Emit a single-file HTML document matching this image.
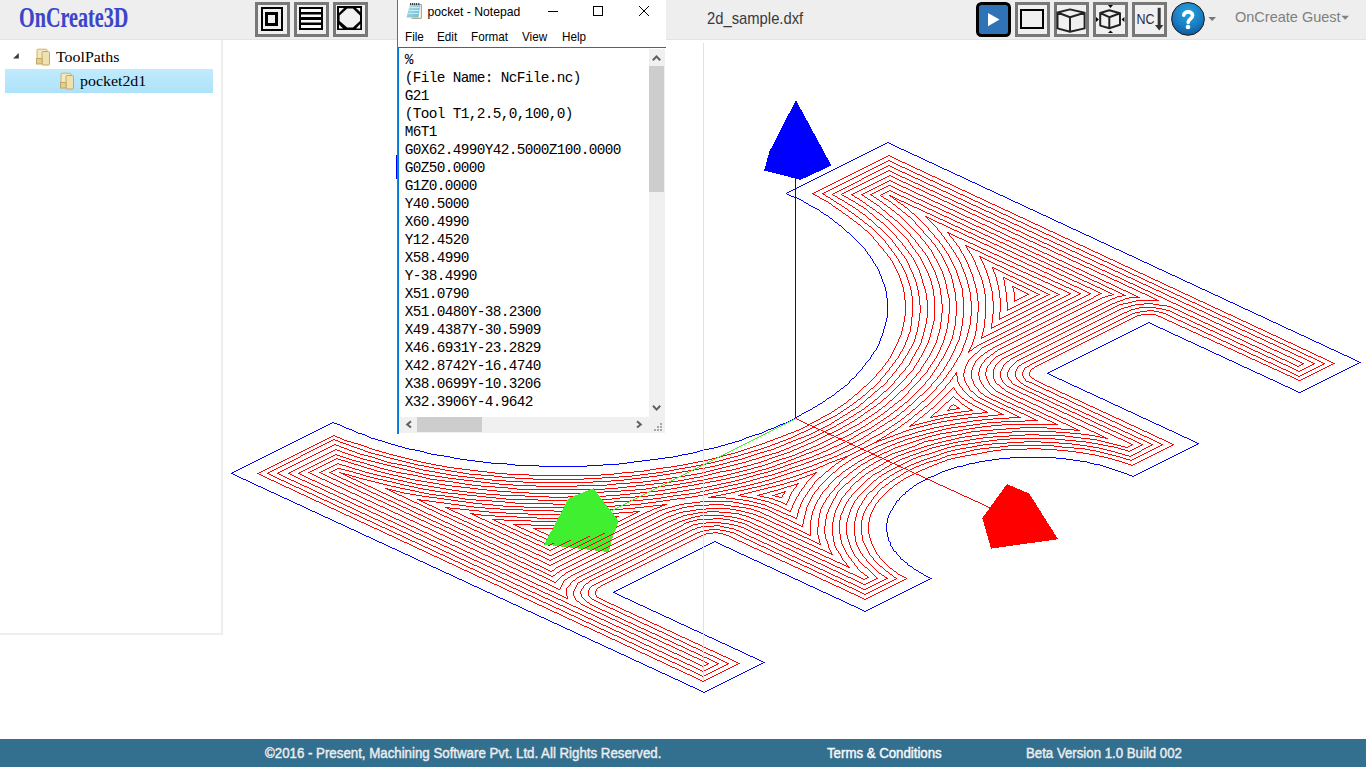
<!DOCTYPE html>
<html><head><meta charset="utf-8">
<style>
*{margin:0;padding:0;box-sizing:border-box}
html,body{width:1366px;height:767px;overflow:hidden;background:#fff;font-family:"Liberation Sans",sans-serif;position:relative}
.abs{position:absolute}
#hdr{left:0;top:0;width:1366px;height:40px;background:#eeeeee;border-bottom:1px solid #e3e3e3}
#logo{left:18.5px;top:0.5px;font-family:"Liberation Serif",serif;font-weight:bold;font-size:28.8px;color:#3b45c9;transform-origin:0 0;transform:scaleX(0.70);-webkit-text-stroke:0.15px #3b45c9;white-space:nowrap;line-height:32px}
.ib{width:35px;height:35px;border:3px solid #777;background:#f0f0f0}
#left{left:0;top:40px;width:223px;height:595px;border-right:2px solid #eee;border-bottom:2px solid #eee;background:#fff}
.tree{font-family:"Liberation Serif",serif;font-size:15.3px;color:#000;white-space:nowrap}
#sel{left:5px;top:69px;width:208px;height:24px;background:linear-gradient(#c1ebfd,#ade2fa)}
#ftr{left:0;top:739px;width:1366px;height:28px;background:#336f8f;color:#ececec;font-size:14px;-webkit-text-stroke:0.45px #ececec}
#ftr span{position:absolute;top:6px;white-space:nowrap;transform-origin:0 0}
#np{left:397px;top:0;width:269px;height:434px;background:#fff;border-left:1px solid #1883d7}
#edit{left:0px;top:47px;width:268px;height:387px;border-top:1px solid #0078d7;border-left:1px solid #0078d7}
.mono{font-family:"Liberation Mono",monospace;font-size:14.4px;letter-spacing:-0.64px;line-height:18px;color:#000;white-space:pre}
.menu{font-size:12.6px;color:#000;top:29.5px;white-space:nowrap;transform-origin:0 0;transform:scaleX(0.93)}
.sb{background:#f0f0f0}
</style></head><body>
<div id="hdr" class="abs"></div>
<div id="logo" class="abs">OnCreate3D</div>
<div class="abs ib" style="left:255px;top:2px"></div>
<div class="abs ib" style="left:294px;top:2px"></div>
<div class="abs ib" style="left:333px;top:2px"></div>
<svg class="abs" style="left:0;top:0" width="400" height="40">
 <g fill="none" stroke="#000">
  <rect x="262" y="8" width="20" height="22" stroke-width="2"/>
  <rect x="266.5" y="13.5" width="10" height="11" stroke-width="3"/>
 </g>
 <rect x="299" y="7" width="24" height="23" fill="#000"/>
 <g fill="#fafafa"><rect x="301" y="9" width="20" height="3"/><rect x="301" y="14.5" width="20" height="2.5"/><rect x="301" y="20" width="20" height="2.5"/><rect x="301" y="25" width="20" height="3"/></g>
 <rect x="337" y="6" width="25" height="24" fill="#000"/>
 <g fill="#f2f2f2">
  <polygon points="347.2,8.6 352.9,8.6 360,15.6 360,20.9 352.9,27.6 347.2,27.6 339.6,20.9 339.6,15.6"/>
  <polygon points="339,8 344,8 339,13"/><polygon points="356,8 360.2,8 360.2,12"/>
  <polygon points="339,24.5 339,28.5 343,28.5"/><polygon points="360.2,24 360.2,28.5 356,28.5"/>
 </g>
</svg>
<div class="abs" style="left:707px;top:9.3px;font-size:17px;color:#3a3a3a;transform-origin:0 0;transform:scaleX(0.87);white-space:nowrap">2d_sample.dxf</div>
<div class="abs" style="left:1235px;top:9px;font-size:14.5px;color:#808080">OnCreate Guest</div>
<svg class="abs" style="left:960px;top:0" width="406" height="40">
 <rect x="17.5" y="3.5" width="32" height="32" rx="4" fill="#2f73b6" stroke="#000" stroke-width="3"/>
 <polygon points="28,13 28,26.2 39.5,19.5" fill="#fff"/>
 <rect x="55" y="2" width="35" height="35" fill="#f0f0f0"/><rect x="56.5" y="3.5" width="32" height="32" fill="none" stroke="#777" stroke-width="3"/>
 <rect x="61" y="10" width="22" height="18" fill="none" stroke="#000" stroke-width="2"/>
 <rect x="94" y="2" width="35" height="35" fill="#f0f0f0"/><rect x="95.5" y="3.5" width="32" height="32" fill="none" stroke="#777" stroke-width="3"/>
 <g fill="none" stroke="#222" stroke-width="2" stroke-linejoin="round">
  <path d="M110,9.4 L97.5,12.5 L97.5,28.4 L110,31.8 L124.6,28.4 L124.6,12.8 Z M97.5,12.5 L110,17.2 L124.6,12.8 M110,17.2 L110,31.8"/>
 </g>
 <rect x="133" y="2" width="35" height="35" fill="#f0f0f0"/><rect x="134.5" y="3.5" width="32" height="32" fill="none" stroke="#777" stroke-width="3"/>
 <g fill="none" stroke="#222" stroke-width="2" stroke-linejoin="round">
  <path d="M149.3,10.2 L140.2,13 L140.2,25.6 L149.3,28.2 L160,24.8 L160,13.3 Z M140.2,13 L149.3,17.2 L160,13.3 M149.3,17.2 L149.3,28.2"/>
 </g>
 <g fill="#000"><polygon points="148,5 153,5 150.5,8"/><polygon points="148,33 153,33 150.5,30.5"/><polygon points="136,17 136,22 138.8,19.5"/><polygon points="164.4,17 164.4,22 161.6,19.5"/></g>
 <rect x="172" y="2" width="35" height="35" fill="#f0f0f0"/><rect x="173.5" y="3.5" width="32" height="32" fill="none" stroke="#777" stroke-width="3"/>
 <text x="176.5" y="24.2" font-family="Liberation Sans" font-size="15" fill="#2b2b4a" textLength="18" lengthAdjust="spacingAndGlyphs">NC</text>
 <rect x="197.7" y="7.8" width="3" height="18" fill="#333"/>
 <polygon points="195,25 203.3,25 199.2,30.5" fill="#333"/>
 <defs><radialGradient id="hg" cx="0.5" cy="0.3" r="0.7"><stop offset="0" stop-color="#25a2da"/><stop offset="0.6" stop-color="#1a7fc4"/><stop offset="1" stop-color="#0f5a9e"/></radialGradient></defs>
 <circle cx="228" cy="18.9" r="16.4" fill="url(#hg)" stroke="#231a16" stroke-width="1"/>
 <path d="M223.8,15.2 C223.8,11 232.5,10.5 232.6,15.4 C232.7,18.6 228.2,19 228.2,22.4" fill="none" stroke="#fff" stroke-width="3.6" stroke-linecap="round"/>
 <circle cx="228" cy="27" r="2.3" fill="#fff"/>
 <polygon points="248.4,17 256,17 252.2,20.9" fill="#777"/>
 <polygon points="381.3,15.8 389,15.8 385.2,19.8" fill="#808080"/>
</svg>

<div id="left" class="abs"></div>
<div id="sel" class="abs"></div>
<svg class="abs" style="left:0;top:40px" width="100" height="60">
 <polygon points="13.1,18.6 18.8,13 18.8,18.6" fill="#3a3a3a"/>
 <g id="fold">
  <rect x="37" y="9.2" width="10" height="14" rx="1" fill="#f3e8bf" stroke="#c9b276" stroke-width="1"/>
  <rect x="42" y="11.5" width="7.5" height="13.5" rx="1" fill="#efe2b0" stroke="#c2a864" stroke-width="1"/>
  <rect x="36.5" y="18.5" width="5.5" height="5.5" fill="#e3cf92" stroke="#c2a864" stroke-width="1"/>
 </g>
 <g transform="translate(24,24)">
  <rect x="37" y="9.2" width="10" height="14" rx="1" fill="#f3e8bf" stroke="#c9b276" stroke-width="1"/>
  <rect x="42" y="11.5" width="7.5" height="13.5" rx="1" fill="#efe2b0" stroke="#c2a864" stroke-width="1"/>
  <rect x="36.5" y="18.5" width="5.5" height="5.5" fill="#e3cf92" stroke="#c2a864" stroke-width="1"/>
 </g>
</svg>
<div class="abs tree" style="left:56px;top:47.5px;transform-origin:0 0;transform:scaleX(1.04)">ToolPaths</div>
<div class="abs tree" style="left:80px;top:71.5px;transform-origin:0 0;transform:scaleX(1.04)">pocket2d1</div>

<svg id="vec" class="abs" style="left:0;top:0" width="1366" height="767" viewBox="0 0 1366 767">
<g fill="none" stroke-width="1" shape-rendering="crispEdges">
<path stroke="#0000ff" d="M1360.5 362.4 L887.8 142.5 L786.8 193.4 L792.6 196.1 L798.2 198.9 L803.6 201.7 L808.9 204.7 L814.1 207.7 L819.1 210.7 L823.9 213.8 L828.6 217.0 L833.1 220.2 L837.5 223.5 L841.7 226.8 L845.7 230.2 L849.5 233.6 L853.2 237.1 L856.7 240.6 L860.0 244.1 L863.1 247.7 L866.1 251.3 L868.9 255.0 L871.4 258.7 L873.8 262.4 L876.0 266.1 L878.1 269.9 L879.9 273.7 L881.5 277.5 L882.9 281.4 L884.2 285.2 L885.2 289.1 L886.1 292.9 L886.7 296.8 L887.2 300.7 L887.4 304.6 L887.5 308.5 L887.4 312.4 L887.0 316.3 L886.5 320.2 L885.8 324.0 L884.8 327.9 L883.7 331.8 L882.4 335.6 L880.9 339.4 L879.2 343.2 L877.3 347.0 L875.2 350.8 L872.9 354.5 L870.5 358.2 L867.8 361.9 L865.0 365.5 L862.0 369.2 L858.8 372.7 L855.4 376.3 L851.8 379.8 L848.1 383.2 L844.2 386.6 L840.1 390.0 L835.8 393.3 L831.4 396.5 L826.8 399.7 L822.1 402.9 L817.2 406.0 L812.1 409.0 L806.9 412.0 L801.6 414.9 L796.0 417.7 L790.4 420.5 L784.6 423.2 L778.7 425.8 L772.6 428.4 L766.5 430.9 L760.2 433.3 L753.7 435.6 L747.2 437.9 L740.5 440.1 L733.8 442.2 L726.9 444.2 L719.9 446.2 L712.9 448.0 L705.7 449.8 L698.5 451.5 L691.1 453.1 L683.7 454.6 L676.2 456.1 L668.7 457.4 L661.1 458.7 L653.4 459.8 L645.6 460.9 L637.9 461.9 L630.0 462.7 L622.1 463.5 L614.2 464.2 L606.3 464.8 L598.3 465.3 L590.3 465.7 L582.3 466.1 L574.2 466.3 L566.2 466.4 L558.2 466.4 L550.1 466.4 L542.1 466.2 L534.1 466.0 L526.0 465.6 L518.0 465.2 L510.1 464.6 L502.1 464.0 L494.2 463.3 L486.4 462.4 L478.6 461.5 L470.8 460.5 L463.1 459.4 L455.4 458.2 L447.8 456.9 L440.3 455.6 L432.8 454.1 L425.5 452.5 L418.2 450.9 L410.9 449.2 L403.8 447.4 L396.8 445.5 L389.9 443.5 L383.0 441.4 L376.3 439.3 L369.7 437.1 L363.2 434.8 L356.8 432.4 L350.6 430.0 L344.4 427.5 L338.4 424.9 L332.6 422.2 L231.6 473.0 L704.3 692.9 L764.9 662.4 L613.6 592.0 L714.6 541.2 L865.8 611.5 L931.4 578.5 L928.9 577.3 L926.4 576.0 L924.0 574.7 L921.6 573.4 L919.3 572.1 L917.1 570.8 L915.0 569.4 L912.9 568.0 L910.9 566.5 L908.9 565.1 L907.1 563.6 L905.3 562.1 L903.6 560.6 L902.0 559.0 L900.4 557.5 L898.9 555.9 L897.5 554.3 L896.2 552.7 L895.0 551.1 L893.8 549.4 L892.8 547.8 L891.8 546.1 L890.9 544.5 L890.1 542.8 L889.4 541.1 L888.7 539.4 L888.2 537.7 L887.7 535.9 L887.3 534.2 L887.1 532.5 L886.9 530.8 L886.7 529.0 L886.7 527.3 L886.8 525.6 L886.9 523.8 L887.2 522.1 L887.5 520.4 L887.9 518.7 L888.4 517.0 L889.0 515.3 L889.6 513.6 L890.4 511.9 L891.2 510.2 L892.2 508.5 L893.2 506.9 L894.3 505.2 L895.5 503.6 L896.7 501.9 L898.1 500.3 L899.5 498.8 L901.0 497.2 L902.6 495.6 L904.2 494.1 L906.0 492.6 L907.8 491.1 L909.7 489.6 L911.6 488.2 L913.7 486.8 L915.8 485.4 L918.0 484.0 L920.2 482.6 L922.5 481.3 L924.9 480.0 L927.4 478.8 L929.9 477.5 L932.4 476.3 L935.1 475.2 L937.8 474.0 L940.5 472.9 L943.3 471.8 L946.2 470.8 L949.1 469.8 L952.0 468.8 L955.0 467.9 L958.1 467.0 L961.2 466.1 L964.3 465.3 L967.5 464.5 L970.7 463.7 L974.0 463.0 L977.3 462.4 L980.6 461.7 L984.0 461.1 L987.3 460.6 L990.8 460.1 L994.2 459.6 L997.7 459.1 L1001.1 458.8 L1004.6 458.4 L1008.2 458.1 L1011.7 457.8 L1015.2 457.6 L1018.8 457.4 L1022.4 457.3 L1025.9 457.2 L1029.5 457.1 L1033.1 457.1 L1036.7 457.1 L1040.2 457.2 L1043.8 457.3 L1047.4 457.5 L1050.9 457.7 L1054.5 457.9 L1058.0 458.2 L1061.5 458.5 L1065.0 458.9 L1068.5 459.3 L1071.9 459.7 L1075.3 460.2 L1078.7 460.8 L1082.1 461.3 L1085.5 461.9 L1088.8 462.6 L1092.1 463.3 L1095.3 464.0 L1098.5 464.8 L1101.7 465.6 L1104.8 466.4 L1107.9 467.3 L1110.9 468.2 L1113.9 469.2 L1116.8 470.2 L1119.7 471.2 L1122.6 472.2 L1125.4 473.3 L1128.1 474.4 L1130.7 475.6 L1133.4 476.8 L1199.0 443.7 L1047.7 373.4 L1148.7 322.5 L1299.9 392.9Z"/>
<path stroke="#ff0000" d="M333.4 435.1 L257.4 473.4 L703.8 681.0 L739.1 663.2 L599.8 598.4 L596.9 596.2 L595.4 592.8 L596.6 589.4 L600.5 586.5 L701.4 535.7 L707.3 533.7 L710.7 533.2 L716.0 533.0 L721.2 533.6 L727.2 535.4 L865.3 599.7 L906.4 579.0 L897.8 573.5 L889.5 567.1 L882.3 560.1 L877.7 554.5 L873.3 547.3 L870.2 539.6 L868.7 531.9 L868.6 525.8 L869.8 518.3 L871.8 512.3 L875.8 504.8 L881.2 497.6 L886.4 492.1 L894.5 485.4 L903.8 479.1 L914.1 473.3 L923.1 469.1 L935.6 464.2 L949.0 459.9 L962.8 456.4 L974.3 454.0 L989.6 451.6 L1005.4 450.0 L1020.9 449.1 L1033.4 448.9 L1049.5 449.3 L1064.9 450.5 L1080.5 452.4 L1092.3 454.4 L1107.0 457.6 L1120.5 461.3 L1132.1 465.3 L1173.2 444.6 L1035.1 380.3 L1031.0 377.5 L1029.6 375.0 L1029.8 372.4 L1030.7 370.8 L1034.6 367.9 L1138.2 315.9 L1144.8 314.5 L1150.1 314.3 L1155.3 314.9 L1159.9 316.2 L1299.4 381.0 L1334.7 363.2 L888.3 155.6 L812.3 193.9 L828.1 202.6 L838.7 209.3 L848.4 216.0 L861.5 226.4 L869.6 233.8 L876.8 241.3 L886.0 252.6 L891.2 260.4 L895.7 268.3 L899.4 276.5 L903.3 288.5 L904.9 296.7 L905.6 304.9 L905.6 313.3 L903.9 325.4 L901.8 333.6 L897.0 345.7 L890.3 357.8 L881.9 369.5 L871.7 380.8 L859.8 391.7 L846.4 402.1 L831.3 412.1 L820.5 418.4 L809.3 424.3 L797.3 430.1 L784.6 435.6 L771.5 440.8 L757.8 445.7 L736.0 452.5 L721.2 456.5 L706.0 460.1 L690.4 463.4 L674.5 466.4 L658.4 468.9 L642.0 471.0 L625.8 472.8 L609.1 474.1 L592.2 475.1 L575.3 475.7 L558.3 475.9 L541.3 475.6 L515.5 474.5 L498.7 473.2 L482.1 471.6 L465.6 469.6 L449.4 467.1 L433.5 464.3 L418.2 461.2 L402.9 457.7 L387.9 453.8 L373.4 449.5 L359.3 444.9 L345.7 440.0Z M333.9 439.9 L267.7 473.3 L703.6 676.1 L728.8 663.3 L594.2 600.7 L591.4 598.7 L589.4 596.5 L588.3 594.1 L588.2 591.7 L589.9 588.1 L592.1 586.0 L595.2 584.1 L698.0 532.4 L702.1 531.0 L706.7 530.0 L711.6 529.5 L716.6 529.5 L723.8 530.3 L728.3 531.4 L732.2 532.9 L865.1 594.7 L896.7 578.8 L885.3 570.6 L877.4 563.5 L870.8 555.6 L866.1 547.8 L862.9 539.9 L861.3 530.0 L861.7 521.9 L863.8 513.8 L866.5 507.9 L870.0 502.0 L874.4 496.3 L879.7 490.8 L885.8 485.4 L892.7 480.3 L900.4 475.5 L908.8 470.9 L917.8 466.7 L928.0 462.6 L938.2 459.0 L949.0 455.9 L960.2 453.1 L971.8 450.7 L983.8 448.8 L996.0 447.3 L1012.6 445.9 L1032.9 445.4 L1049.7 445.8 L1066.3 447.0 L1082.6 449.0 L1098.9 451.9 L1114.1 455.4 L1131.3 460.6 L1162.9 444.7 L1030.0 382.9 L1026.8 381.0 L1024.4 378.9 L1022.4 375.4 L1022.3 373.0 L1023.2 370.6 L1025.0 368.4 L1029.3 365.4 L1130.3 314.6 L1136.2 312.3 L1143.2 311.1 L1150.7 310.8 L1158.0 311.6 L1164.4 313.4 L1299.2 376.0 L1324.4 363.3 L888.5 160.5 L822.3 193.9 L833.7 200.4 L844.3 207.0 L854.5 214.1 L863.7 221.2 L872.2 228.6 L883.2 239.6 L889.8 247.4 L895.8 255.6 L900.7 263.7 L906.5 275.6 L909.5 284.2 L911.5 292.5 L912.7 300.9 L912.9 313.2 L911.9 321.9 L910.1 330.2 L907.5 338.5 L904.1 346.4 L897.4 358.6 L888.8 370.5 L878.5 382.0 L866.4 393.2 L852.4 404.1 L837.0 414.3 L825.9 420.8 L814.6 426.7 L802.3 432.7 L789.4 438.3 L776.0 443.6 L762.0 448.5 L739.6 455.5 L724.5 459.6 L709.0 463.4 L693.1 466.7 L676.9 469.7 L660.4 472.3 L643.6 474.5 L627.3 476.2 L610.2 477.6 L593.0 478.6 L575.7 479.2 L558.4 479.4 L541.0 479.1 L523.7 478.5 L506.5 477.4 L489.5 476.0 L472.6 474.1 L447.0 470.5 L431.3 467.7 L415.3 464.5 L399.7 460.8 L384.4 456.9 L369.6 452.5 L355.2 447.8Z M334.5 444.7 L278.0 473.2 L703.4 671.1 L718.5 663.4 L590.9 604.1 L585.0 600.4 L581.6 596.0 L580.9 591.4 L582.1 588.3 L584.4 585.4 L590.0 581.6 L693.3 529.7 L698.5 527.9 L704.4 526.7 L710.7 526.0 L717.1 526.0 L726.5 527.0 L732.2 528.4 L737.3 530.3 L864.9 589.7 L887.2 578.5 L878.7 572.1 L870.5 564.6 L863.9 556.8 L859.0 548.6 L855.7 540.3 L854.1 531.9 L854.2 523.4 L856.0 515.0 L858.5 508.7 L863.1 500.9 L867.7 495.0 L873.2 489.2 L879.5 483.6 L886.7 478.3 L894.7 473.3 L903.4 468.5 L912.9 464.1 L922.9 460.0 L934.3 456.1 L945.5 452.8 L957.2 449.9 L969.3 447.4 L985.2 444.9 L998.0 443.5 L1015.3 442.2 L1032.8 441.8 L1050.3 442.3 L1067.6 443.5 L1084.6 445.6 L1101.1 448.5 L1116.9 452.1 L1130.3 456.0 L1152.6 444.8 L1025.0 385.4 L1019.1 381.7 L1016.5 378.9 L1015.2 375.8 L1015.0 372.7 L1016.2 369.7 L1018.5 366.8 L1022.0 364.1 L1125.0 312.1 L1132.6 309.3 L1141.6 307.6 L1151.2 307.3 L1160.6 308.3 L1169.0 310.6 L1299.0 371.0 L1314.1 363.4 L888.7 165.5 L832.1 194.0 L844.8 201.5 L855.2 208.4 L865.5 215.8 L874.5 223.2 L882.7 230.8 L890.2 238.5 L899.6 250.1 L905.1 258.3 L909.8 266.5 L913.8 275.3 L916.7 283.7 L918.7 292.2 L919.9 300.8 L920.3 309.4 L919.7 317.9 L917.4 330.3 L913.1 343.0 L906.7 355.9 L901.7 363.7 L895.7 371.7 L885.1 383.5 L872.8 394.9 L858.3 406.2 L842.7 416.5 L831.4 423.1 L820.0 429.2 L807.4 435.2 L794.2 440.9 L772.8 449.1 L759.0 453.8 L744.0 458.4 L728.5 462.6 L712.7 466.4 L696.5 469.8 L680.0 472.9 L653.9 476.8 L636.7 478.9 L619.3 480.5 L601.8 481.7 L584.1 482.5 L566.5 482.9 L549.6 482.8 L531.9 482.4 L514.3 481.5 L496.8 480.2 L479.4 478.5 L453.0 475.1 L437.0 472.5 L420.5 469.4 L404.4 465.9 L388.6 462.0 L373.2 457.8 L358.3 453.2Z M335.2 449.4 L288.2 473.1 L703.2 666.1 L708.2 663.5 L585.8 606.6 L580.7 603.7 L576.9 600.4 L574.5 596.8 L573.8 594.9 L573.7 591.1 L575.0 587.4 L577.9 583.8 L582.1 580.6 L584.7 579.2 L688.5 527.0 L695.0 524.9 L702.2 523.3 L709.8 522.5 L717.7 522.4 L725.4 523.1 L732.7 524.5 L736.2 525.4 L742.3 527.8 L864.7 584.7 L877.8 578.1 L870.1 572.0 L862.4 564.5 L855.9 556.3 L851.9 549.4 L848.5 540.8 L846.9 532.5 L846.9 523.6 L848.2 516.6 L850.5 510.1 L854.8 502.0 L859.6 495.3 L865.1 489.2 L871.5 483.4 L878.7 477.7 L886.8 472.4 L898.1 466.1 L907.9 461.5 L919.2 457.0 L930.3 453.1 L945.2 448.9 L957.5 446.0 L971.1 443.4 L984.2 441.4 L1001.0 439.6 L1019.1 438.5 L1033.8 438.3 L1051.0 438.8 L1069.0 440.1 L1083.3 441.7 L1100.5 444.6 L1116.3 448.0 L1129.2 451.5 L1142.3 444.9 L1017.2 386.6 L1012.8 383.4 L1011.0 381.7 L1008.6 378.1 L1007.7 374.4 L1007.8 372.5 L1009.1 368.7 L1012.0 365.2 L1016.2 362.0 L1119.8 309.7 L1122.6 308.4 L1129.1 306.2 L1136.3 304.7 L1140.1 304.2 L1147.9 303.7 L1151.8 303.8 L1155.7 304.0 L1163.3 305.0 L1170.3 306.8 L1176.4 309.1 L1298.8 366.0 L1303.9 363.5 L888.9 170.5 L842.0 194.2 L855.9 202.8 L866.3 209.9 L875.9 217.3 L884.7 224.9 L892.8 232.8 L900.4 241.2 L906.8 249.4 L912.4 257.7 L917.1 266.1 L920.9 274.7 L925.0 287.1 L926.7 295.8 L927.5 304.6 L927.4 313.3 L926.5 322.0 L924.6 330.7 L920.1 344.1 L913.6 356.9 L908.3 365.2 L902.5 373.0 L891.7 385.0 L878.7 397.0 L864.3 408.2 L848.3 418.7 L836.8 425.5 L825.3 431.6 L812.5 437.7 L799.0 443.6 L777.1 452.0 L763.0 456.7 L747.8 461.4 L732.0 465.7 L715.9 469.6 L699.3 473.1 L682.5 476.2 L655.7 480.3 L638.1 482.3 L620.4 484.0 L602.5 485.2 L585.5 486.0 L567.5 486.4 L549.4 486.4 L521.4 485.5 L503.5 484.4 L485.8 482.8 L468.2 480.8 L451.7 478.6 L425.2 474.1 L408.6 470.7 L392.3 467.0 L376.5 462.8 L361.9 458.5 L346.9 453.6Z M567.7 598.2 L566.3 593.1 L567.0 588.6 L568.0 586.4 L571.4 582.2 L576.4 578.5 L683.8 524.4 L687.5 523.0 L695.6 520.8 L699.9 520.0 L709.0 519.0 L718.3 518.9 L727.4 519.7 L736.0 521.4 L743.9 523.8 L864.5 579.7 L868.6 577.7 L859.8 570.1 L852.2 561.7 L847.2 554.7 L842.8 545.8 L840.3 537.2 L839.4 530.4 L839.6 523.5 L840.9 516.6 L843.1 509.9 L846.8 502.6 L852.4 494.5 L858.0 488.1 L865.2 481.6 L872.7 475.7 L881.1 470.2 L892.8 463.7 L903.9 458.5 L917.7 453.1 L930.4 448.9 L942.7 445.5 L955.5 442.5 L972.2 439.5 L986.9 437.4 L1000.9 436.0 L1018.5 435.0 L1032.7 434.8 L1046.9 435.1 L1061.0 435.8 L1076.1 437.2 L1094.4 439.7 L1112.0 443.1 L1127.9 447.0 L1132.0 445.0 L1011.7 388.9 L1006.4 385.2 L1002.7 381.1 L1000.7 376.7 L1000.5 372.2 L1002.1 367.8 L1003.6 365.6 L1005.5 363.6 L1010.5 359.8 L1117.9 305.7 L1125.5 303.1 L1134.0 301.3 L1138.5 300.7 L1147.7 300.2 L1158.3 300.7 L889.1 175.5 L851.7 194.4 L862.4 201.1 L872.9 208.4 L882.7 216.0 L891.7 223.7 L899.8 231.7 L907.2 239.9 L913.7 248.2 L919.4 256.7 L924.2 265.3 L928.1 274.0 L931.1 282.8 L933.3 291.7 L934.5 300.6 L934.8 309.5 L934.3 318.4 L932.8 327.3 L930.6 335.5 L927.4 344.3 L920.9 357.3 L912.5 370.1 L901.7 383.0 L889.4 394.9 L880.3 402.7 L871.0 409.7 L854.0 421.0 L842.2 427.8 L830.6 434.0 L809.9 443.7 L788.7 452.2 L773.8 457.5 L759.4 462.1 L734.5 469.0 L718.0 473.0 L702.2 476.3 L675.2 481.1 L658.6 483.5 L640.7 485.7 L613.6 488.1 L595.3 489.1 L576.9 489.8 L558.5 490.0 L540.1 489.7 L521.8 489.0 L503.5 487.9 L485.4 486.4 L467.4 484.4 L449.7 482.0 L432.2 479.2 L415.0 475.9 L398.2 472.3 L381.8 468.3 L365.8 463.8 L350.3 459.1 L336.0 454.2 L298.5 473.0Z M559.4 589.4 L561.0 585.5 L562.7 583.0 L564.9 580.6 L570.7 576.3 L675.2 523.5 L683.3 520.1 L692.7 517.6 L702.8 516.0 L708.1 515.5 L718.8 515.4 L729.4 516.3 L739.4 518.2 L748.4 521.0 L849.6 567.9 L843.7 560.8 L839.3 554.0 L835.9 547.0 L833.6 540.0 L832.3 532.9 L832.1 525.7 L833.1 518.6 L835.1 511.5 L838.1 504.6 L842.3 497.7 L847.4 491.0 L853.6 484.5 L860.7 478.3 L868.8 472.3 L878.6 466.1 L888.4 460.8 L899.1 455.9 L910.4 451.3 L922.4 447.2 L935.1 443.5 L948.2 440.2 L961.8 437.5 L975.8 435.2 L990.1 433.5 L1004.6 432.2 L1019.3 431.5 L1034.0 431.3 L1048.7 431.6 L1063.4 432.4 L1077.9 433.8 L1092.1 435.7 L1107.1 438.2 L1006.2 391.1 L1000.0 386.9 L995.8 382.1 L993.5 377.1 L993.2 371.9 L993.9 369.3 L996.8 364.3 L1001.7 359.7 L1008.3 355.6 L1113.2 303.0 L1122.0 300.0 L1126.8 298.9 L1131.8 298.0 L1139.9 297.0 L889.3 180.5 L861.4 194.6 L879.0 206.5 L889.0 214.2 L898.1 222.1 L906.5 230.3 L914.0 238.6 L920.6 247.1 L926.4 255.7 L931.3 264.5 L935.3 273.4 L938.4 282.4 L940.4 290.7 L941.7 299.8 L942.1 308.9 L941.6 318.0 L940.2 327.0 L936.1 341.2 L930.1 354.5 L924.9 363.2 L919.4 371.2 L908.3 384.4 L895.8 396.7 L886.5 404.5 L877.1 411.6 L859.7 423.2 L848.5 429.7 L835.9 436.4 L814.7 446.3 L793.0 455.0 L777.9 460.4 L763.4 465.0 L737.8 472.2 L721.0 476.2 L705.0 479.6 L677.3 484.5 L660.6 486.9 L642.4 489.1 L613.4 491.6 L594.7 492.7 L576.0 493.3 L557.2 493.5 L538.5 493.2 L519.8 492.5 L501.1 491.3 L482.7 489.7 L465.7 487.8 L447.6 485.4 L429.8 482.5 L412.3 479.2 L395.2 475.5 L378.4 471.4 L362.1 466.9 L336.8 458.8 L308.8 472.9Z M555.3 582.6 L558.4 579.0 L561.5 576.5 L569.0 571.9 L669.9 521.0 L679.1 517.2 L684.3 515.6 L695.4 513.3 L701.3 512.5 L713.3 511.8 L725.4 512.3 L737.1 513.9 L747.9 516.5 L757.5 520.2 L832.3 555.0 L829.5 549.4 L827.0 542.9 L825.6 537.3 L824.8 529.9 L825.1 522.5 L826.4 515.8 L828.2 510.2 L831.1 503.7 L834.2 498.3 L838.8 492.0 L843.3 486.8 L850.1 480.1 L857.1 474.4 L865.8 468.3 L873.0 463.8 L882.2 458.9 L893.1 453.7 L902.0 450.0 L913.0 446.0 L925.9 442.0 L936.1 439.2 L948.5 436.3 L959.3 434.2 L973.8 431.8 L987.1 430.2 L998.6 429.1 L1013.8 428.1 L1027.5 427.8 L1039.2 427.8 L1054.5 428.3 L1068.1 429.2 L1079.6 430.4 L1004.8 395.6 L996.9 391.1 L991.0 386.0 L987.2 380.4 L985.8 374.6 L986.8 368.7 L988.1 365.8 L992.5 360.4 L995.6 357.8 L1003.1 353.2 L1104.0 302.3 L1113.2 298.5 L1118.4 297.0 L1125.7 295.3 L889.5 185.5 L870.9 194.8 L879.8 200.8 L890.3 208.5 L900.1 216.5 L909.0 224.6 L917.0 233.0 L923.7 240.9 L930.1 249.7 L935.6 258.5 L942.4 272.8 L945.6 281.9 L947.8 291.1 L949.1 300.3 L949.4 309.6 L948.8 318.8 L947.4 327.3 L943.5 341.1 L937.1 355.4 L931.9 364.3 L926.3 372.4 L914.9 385.9 L902.2 398.4 L893.4 405.8 L883.1 413.6 L865.3 425.4 L853.1 432.5 L841.2 438.8 L820.6 448.5 L797.4 457.8 L782.0 463.3 L767.3 468.0 L741.1 475.3 L724.0 479.4 L707.9 482.8 L679.5 487.9 L662.6 490.3 L644.0 492.5 L614.3 495.1 L596.8 496.2 L577.8 496.8 L558.6 497.0 L539.5 496.8 L509.4 495.4 L490.5 494.0 L471.8 492.2 L454.7 490.0 L436.4 487.3 L418.4 484.2 L400.8 480.6 L383.5 476.7 L366.7 472.3 L350.3 467.5 L337.7 463.4 L319.1 472.8Z M552.9 576.6 L559.3 571.9 L563.7 569.4 L664.7 518.6 L669.6 516.3 L680.7 512.6 L686.8 511.1 L699.7 509.1 L713.2 508.3 L726.7 508.8 L739.8 510.6 L751.9 513.6 L762.5 517.6 L820.1 544.4 L817.7 532.5 L818.1 520.5 L819.4 514.6 L821.7 507.9 L827.3 497.2 L836.0 486.0 L841.3 480.7 L848.2 474.7 L860.9 465.6 L876.9 456.5 L885.6 452.3 L896.2 447.8 L914.6 441.3 L926.6 437.7 L937.4 434.9 L960.2 430.3 L971.8 428.4 L985.5 426.7 L1007.9 424.9 L1032.6 424.2 L1057.4 424.9 L999.8 398.1 L990.9 393.1 L984.3 387.4 L980.1 381.2 L978.5 374.6 L979.6 368.1 L981.1 364.9 L986.0 358.8 L993.4 353.2 L997.8 350.8 L1098.8 299.9 L1103.7 297.6 L1113.2 294.4 L889.7 190.5 L880.5 195.1 L891.3 202.7 L901.6 210.7 L911.1 218.9 L919.7 227.4 L927.5 236.0 L934.4 244.8 L940.4 253.8 L945.5 262.9 L951.3 276.8 L953.8 285.3 L955.7 294.7 L956.7 308.8 L955.4 323.8 L952.0 337.8 L948.5 347.1 L944.6 355.5 L935.8 369.9 L929.1 378.7 L922.2 386.7 L908.5 400.1 L898.8 408.3 L889.2 415.5 L871.0 427.6 L858.5 434.9 L846.5 441.2 L824.3 451.6 L810.8 457.2 L795.4 463.0 L769.8 471.4 L754.5 475.8 L737.3 480.2 L709.1 486.4 L692.5 489.5 L674.0 492.4 L644.0 496.1 L624.9 497.9 L607.3 499.1 L576.5 500.4 L547.2 500.4 L527.8 499.9 L510.1 499.0 L481.3 496.8 L462.3 494.7 L443.5 492.1 L425.0 489.2 L406.8 485.7 L389.0 481.9 L371.7 477.6 L354.7 473.0 L338.7 468.0 L329.4 472.7Z M551.5 571.1 L558.5 567.0 L659.4 516.1 L664.9 513.6 L670.8 511.4 L677.2 509.5 L683.9 507.9 L690.9 506.6 L698.2 505.6 L705.6 505.0 L713.0 504.8 L720.5 504.9 L728.0 505.3 L735.3 506.1 L742.4 507.3 L749.3 508.8 L755.8 510.6 L761.9 512.7 L767.6 515.1 L810.7 535.1 L810.5 522.9 L812.6 512.4 L816.9 502.1 L823.9 491.1 L832.4 481.4 L842.9 472.1 L857.3 462.0 L871.6 454.1 L888.8 446.2 L906.1 439.8 L924.6 434.2 L947.5 428.9 L969.8 425.0 L991.0 422.6 L1012.6 421.1 L1037.8 420.7 L994.7 400.7 L989.6 398.0 L985.0 395.1 L981.0 392.1 L977.6 388.8 L975.0 385.4 L973.0 381.9 L971.8 378.3 L971.2 374.7 L971.5 371.1 L972.4 367.5 L974.1 363.9 L976.5 360.5 L979.6 357.2 L983.3 354.0 L987.6 351.1 L992.6 348.3 L1093.5 297.5 L1101.7 293.9 L889.9 195.4 L907.9 208.9 L917.6 217.3 L925.6 225.1 L937.9 239.2 L943.9 247.4 L949.6 256.6 L956.8 271.5 L959.8 280.1 L962.1 289.6 L963.9 304.9 L963.8 313.6 L962.8 323.2 L959.2 338.4 L955.7 347.9 L951.6 356.3 L942.7 371.0 L935.9 380.0 L928.9 388.1 L914.9 401.8 L906.0 409.3 L895.3 417.4 L876.7 429.8 L864.0 437.2 L851.8 443.6 L829.1 454.3 L815.4 459.9 L799.8 465.8 L773.6 474.4 L758.1 478.9 L740.6 483.4 L711.8 489.7 L693.2 493.1 L676.1 495.8 L657.0 498.3 L637.6 500.4 L606.4 502.8 L588.5 503.6 L568.7 504.0 L537.0 503.8 L519.1 503.1 L499.4 501.9 L468.4 499.0 L449.1 496.6 L432.0 494.1 L402.4 488.7 L384.3 484.7 L368.3 480.8 L339.7 472.6Z M385.0 488.8 L550.8 565.9 L654.2 513.7 L660.1 511.0 L666.6 508.5 L673.6 506.4 L681.0 504.6 L688.7 503.2 L696.6 502.2 L704.7 501.5 L712.9 501.2 L721.1 501.4 L729.3 501.9 L737.3 502.8 L745.1 504.0 L752.6 505.6 L759.7 507.6 L766.4 509.9 L803.0 526.7 L804.3 516.3 L807.8 505.6 L812.8 496.0 L820.4 485.7 L828.4 477.4 L839.7 468.0 L851.5 459.9 L866.2 451.6 L879.9 445.3 L897.4 438.4 L916.2 432.5 L936.2 427.4 L957.1 423.3 L976.7 420.5 L998.8 418.4 L1020.0 417.3 L984.0 400.3 L979.0 397.2 L974.6 393.8 L971.0 390.2 L968.0 386.5 L965.9 382.7 L964.5 378.7 L964.0 374.8 L964.2 370.8 L965.2 366.9 L967.1 363.0 L969.7 359.2 L973.1 355.6 L977.1 352.1 L981.9 348.9 L987.3 345.9 L1090.9 293.8 L925.1 216.7 L933.0 224.5 L940.3 232.5 L950.8 246.3 L959.2 260.4 L965.7 275.7 L968.5 285.4 L970.2 294.1 L971.3 308.8 L970.1 323.4 L966.7 338.0 L961.1 352.4 L952.7 367.5 L942.6 381.4 L930.5 394.8 L916.3 407.8 L900.3 420.2 L882.3 432.0 L869.4 439.6 L857.2 446.0 L835.4 456.3 L810.6 466.3 L785.9 474.8 L770.5 479.5 L752.9 484.3 L725.7 490.7 L695.6 496.4 L666.6 500.7 L637.1 504.0 L607.1 506.3 L587.0 507.1 L568.9 507.5 L538.6 507.3 L508.4 506.0 L476.5 503.5 L447.1 500.0 L418.3 495.5 L401.4 492.3Z M550.5 560.8 L648.9 511.2 L655.4 508.3 L666.6 504.4 L648.5 506.5 L630.5 508.2 L599.9 510.2 L569.1 511.1 L538.3 510.9 L507.6 509.5 L477.2 507.1 L447.2 503.7 L417.9 499.1Z M708.6 497.9 L721.7 497.8 L730.5 498.4 L739.3 499.4 L747.7 500.7 L755.9 502.5 L763.6 504.7 L770.9 507.2 L796.5 518.7 L798.6 510.4 L802.7 500.4 L808.3 491.3 L816.0 481.8 L824.7 473.3 L835.5 464.6 L847.1 456.9 L860.9 449.2 L875.1 442.6 L891.4 436.2 L907.6 430.9 L926.0 425.9 L943.9 422.0 L963.7 418.6 L982.7 416.2 L1003.4 414.5 L978.5 402.6 L973.0 399.2 L968.3 395.5 L964.3 391.6 L961.1 387.6 L958.8 383.4 L957.3 379.2 L956.8 372.8 L949.4 382.7 L941.4 391.9 L928.7 404.3 L918.5 412.9 L907.5 421.3 L894.3 430.3 L876.3 441.1 L862.5 448.4 L846.3 456.2 L830.9 462.8 L815.0 469.1 L791.7 477.2 L774.3 482.5 L754.4 487.9 L728.7 493.9Z M968.6 352.3 L976.2 346.7 L982.1 343.4 L1080.5 293.8 L947.9 232.2 L958.4 246.2 L966.7 260.5 L972.9 275.1 L976.8 290.0 L978.5 304.9 L977.9 319.8 L975.0 334.6 L972.2 343.4Z M550.3 555.8 L639.3 511.0 L611.1 513.1 L587.9 514.2 L567.0 514.6 L538.0 514.4 L517.1 513.6 L494.0 512.2 L473.4 510.4 L445.5 507.1Z M738.3 495.6 L750.4 497.4 L759.2 499.4 L767.6 501.7 L775.4 504.4 L790.9 511.3 L794.8 501.3 L800.7 491.2 L807.9 482.0 L816.9 472.8 L795.8 480.1 L778.1 485.5 L757.7 491.0Z M909.4 426.2 L928.0 421.5 L946.8 417.6 L967.3 414.4 L987.8 412.1 L972.9 404.9 L967.0 401.2 L961.9 397.2 L957.6 393.1 L953.4 387.3 L944.6 396.9 L934.0 406.9 L923.6 415.7Z M981.2 338.8 L1070.2 293.9 L965.4 245.2 L973.3 258.6 L977.8 268.5 L981.3 278.5 L984.1 289.7 L985.5 299.8 L985.7 313.8 L984.4 325.1Z M550.1 550.9 L618.9 516.2 L598.9 517.3 L580.2 517.9 L545.7 518.1 L527.1 517.6 L505.9 516.6 L484.9 515.0 L470.0 513.6Z M757.3 495.1 L771.5 498.7 L779.9 501.6 L786.1 504.2 L791.9 493.0 L798.9 483.3 L779.7 489.1Z M930.4 417.1 L950.1 413.3 L973.0 410.0 L967.4 407.2 L961.1 403.2 L953.0 396.5 L941.6 407.6Z M991.1 328.7 L1059.9 294.0 L979.8 256.8 L983.3 263.9 L987.3 274.1 L990.3 284.3 L992.0 293.3 L993.1 309.9 L992.6 319.0Z M549.9 545.9 L599.6 520.8 L569.8 521.6 L545.4 521.6 L515.8 520.6 L492.5 519.2Z M772.9 495.0 L781.5 497.9 L785.1 491.7 L776.3 494.1Z M947.1 410.1 L959.7 408.1 L953.6 404.0 L951.8 405.7Z M999.8 319.2 L1049.6 294.1 L992.2 267.5 L996.1 278.7 L999.3 293.0 L1000.3 304.8Z M549.7 540.9 L581.3 525.0 L548.1 525.1 L513.5 524.1Z M1007.7 310.2 L1039.3 294.2 L1003.1 277.4 L1006.7 294.1Z M549.5 535.9 L563.7 528.7 L533.3 528.4Z M1014.7 301.5 L1029.0 294.3 L1012.8 286.8 L1014.0 293.9Z"/>
</g>
<line x1="795.6" y1="418" x2="795.6" y2="178" stroke="#0000ff" stroke-width="1" shape-rendering="crispEdges"/>
<line x1="795.6" y1="418" x2="989" y2="507.5" stroke="#ff0000" stroke-width="1" shape-rendering="crispEdges"/>
<line x1="795.6" y1="418" x2="612" y2="510.5" stroke="#40f030" stroke-width="1" shape-rendering="crispEdges"/>
<polygon points="795.9,100 769.4,151.6 764.1,170.3 800.2,179.2 831,165.3" fill="#0000ff"/>
<polygon points="1006.9,484.1 1029.2,493.5 1058,539.2 991.1,548.6 982.3,518.1" fill="#ff0000"/>
<polygon points="593.3,488.2 568.7,498.2 544.1,544.5 608.6,552.1 612,539.2 618.6,521" fill="#40f030"/>
<defs><clipPath id="gclip"><polygon points="538,547 552,543.5 569,540.5 586,536.8 603,533.5 620,529 625,570 538,570"/></clipPath></defs>

<line x1="396.5" y1="155" x2="396.5" y2="179" stroke="#0000ff" stroke-width="1"/>
<rect x="703" y="43" width="1" height="638" fill="#ffff00"/>
</svg>
<canvas id="cv" class="abs" width="1366" height="767" style="left:0;top:0;display:none"></canvas>
<script>
(function(){
var BL=[[1360,362,887,142,786,193,792,196,798,198,803,201,808,204,814,207,819,210,823,213,828,216,833,220,837,223,841,226,845,230,849,233,853,237,856,240,860,244,863,247,866,251,868,254,871,258,873,262,876,266,878,269,879,273,881,277,882,281,884,285,885,289,886,292,886,296,887,300,887,304,887,308,887,312,887,316,886,320,885,324,884,327,883,331,882,335,880,339,879,343,877,347,875,350,872,354,870,358,867,361,864,365,861,369,858,372,855,376,851,379,848,383,844,386,840,389,835,393,831,396,826,399,822,402,817,405,812,408,806,411,801,414,796,417,790,420,784,423,778,425,772,428,766,430,760,433,753,435,747,437,740,440,733,442,726,444,719,446,712,448,705,449,698,451,691,453,683,454,676,456,668,457,661,458,653,459,645,460,637,461,630,462,622,463,614,464,606,464,598,465,590,465,582,466,574,466,566,466,558,466,550,466,542,466,534,465,526,465,518,465,510,464,502,463,494,463,486,462,478,461,470,460,463,459,455,458,447,456,440,455,432,454,425,452,418,450,410,449,403,447,396,445,389,443,383,441,376,439,369,437,363,434,356,432,350,429,344,427,338,424,332,422,231,473,704,692,764,662,613,592,714,541,865,611,931,578,928,577,926,576,923,574,921,573,919,572,917,570,914,569,912,567,910,566,908,565,907,563,905,562,903,560,901,559,900,557,898,555,897,554,896,552,894,551,893,549,892,547,891,546,890,544,890,542,889,541,888,539,888,537,887,535,887,534,887,532,886,530,886,529,886,527,886,525,886,523,887,522,887,520,887,518,888,516,888,515,889,513,890,511,891,510,892,508,893,506,894,505,895,503,896,501,898,500,899,498,900,497,902,495,904,494,905,492,907,491,909,489,911,488,913,486,915,485,917,483,920,482,922,481,924,480,927,478,929,477,932,476,935,475,937,474,940,472,943,471,946,470,949,469,952,468,955,467,958,466,961,466,964,465,967,464,970,463,973,463,977,462,980,461,983,461,987,460,990,460,994,459,997,459,1001,458,1004,458,1008,458,1011,457,1015,457,1018,457,1022,457,1025,457,1029,457,1033,457,1036,457,1040,457,1043,457,1047,457,1050,457,1054,457,1057,458,1061,458,1064,458,1068,459,1071,459,1075,460,1078,460,1082,461,1085,461,1088,462,1092,463,1095,464,1098,464,1101,465,1104,466,1107,467,1110,468,1113,469,1116,470,1119,471,1122,472,1125,473,1128,474,1130,475,1133,476,1198,443,1047,373,1148,322,1299,392,1360,362]];
var RD=[[333,435,257,473,703,681,739,663,599,598,596,596,595,592,596,589,600,586,701,535,707,533,710,533,715,532,721,533,727,535,865,599,906,578,897,573,889,567,882,560,877,554,873,547,870,539,868,531,868,525,869,518,871,512,875,504,881,497,886,492,894,485,903,479,914,473,923,469,935,464,948,459,962,456,974,454,989,451,1005,449,1020,449,1033,448,1049,449,1064,450,1080,452,1092,454,1106,457,1120,461,1132,465,1173,444,1035,380,1031,377,1029,375,1029,372,1030,370,1034,367,1138,315,1144,314,1150,314,1155,314,1159,316,1299,380,1334,363,888,155,812,193,828,202,838,209,848,216,861,226,869,233,876,241,885,252,891,260,895,268,899,276,903,288,904,296,905,304,905,313,903,325,901,333,896,345,890,357,881,369,871,380,859,391,846,402,831,412,820,418,809,424,797,430,784,435,771,440,757,445,736,452,721,456,705,460,690,463,674,466,658,468,641,471,625,472,609,474,592,475,575,475,558,475,541,475,515,474,498,473,482,471,465,469,449,467,433,464,418,461,402,457,387,453,373,449,359,444,345,440,333,435],[333,439,267,473,703,676,728,663,594,600,591,598,589,596,588,594,588,591,589,588,592,585,595,584,697,532,702,531,706,530,711,529,716,529,723,530,728,531,732,532,865,594,896,578,885,570,877,563,870,555,866,547,862,539,861,530,861,521,863,513,866,507,870,502,874,496,879,490,885,485,892,480,900,475,908,470,917,466,927,462,938,459,948,455,960,453,971,450,983,448,995,447,1012,445,1032,445,1049,445,1066,447,1082,448,1098,451,1114,455,1131,460,1162,444,1030,382,1026,381,1024,378,1022,375,1022,373,1023,370,1024,368,1029,365,1130,314,1136,312,1143,311,1150,310,1157,311,1164,313,1299,376,1324,363,888,160,822,193,833,200,844,207,854,214,863,221,872,228,883,239,889,247,895,255,900,263,906,275,909,284,911,292,912,300,912,313,911,321,910,330,907,338,904,346,897,358,888,370,878,382,866,393,852,404,837,414,825,420,814,426,802,432,789,438,776,443,762,448,739,455,724,459,708,463,693,466,676,469,660,472,643,474,627,476,610,477,592,478,575,479,558,479,541,479,523,478,506,477,489,475,472,474,447,470,431,467,415,464,399,460,384,456,369,452,355,447,333,439],[334,444,277,473,703,671,718,663,590,604,585,600,581,596,580,591,582,588,584,585,589,581,693,529,698,527,704,526,710,526,717,525,726,527,732,528,737,530,864,589,887,578,878,572,870,564,863,556,858,548,855,540,854,531,854,523,856,514,858,508,863,500,867,494,873,489,879,483,886,478,894,473,903,468,912,464,922,460,934,456,945,452,957,449,969,447,985,444,998,443,1015,442,1032,441,1050,442,1067,443,1084,445,1101,448,1116,452,1130,456,1152,444,1024,385,1019,381,1016,378,1015,375,1015,372,1016,369,1018,366,1021,364,1125,312,1132,309,1141,307,1151,307,1160,308,1168,310,1299,371,1314,363,888,165,832,194,844,201,855,208,865,215,874,223,882,230,890,238,899,250,905,258,909,266,913,275,916,283,918,292,919,300,920,309,919,317,917,330,913,343,906,355,901,363,895,371,885,383,872,394,858,406,842,416,831,423,819,429,807,435,794,440,772,449,758,453,743,458,728,462,712,466,696,469,679,472,653,476,636,478,619,480,601,481,584,482,566,482,549,482,531,482,514,481,496,480,479,478,453,475,437,472,420,469,404,465,388,462,373,457,358,453,334,444],[335,449,288,473,703,666,708,663,585,606,580,603,576,600,574,596,573,594,573,591,575,587,577,583,582,580,584,579,688,527,694,524,702,523,709,522,717,522,725,523,732,524,736,525,742,527,864,584,877,578,870,571,862,564,855,556,851,549,848,540,846,532,846,523,848,516,850,510,854,501,859,495,865,489,871,483,878,477,886,472,898,466,907,461,919,456,930,453,945,448,957,445,971,443,984,441,1001,439,1019,438,1033,438,1050,438,1069,440,1083,441,1100,444,1116,447,1129,451,1142,444,1017,386,1012,383,1011,381,1008,378,1007,374,1007,372,1009,368,1012,365,1016,361,1119,309,1122,308,1129,306,1136,304,1140,304,1147,303,1151,303,1155,304,1163,305,1170,306,1176,309,1298,366,1303,363,888,170,841,194,855,202,866,209,875,217,884,224,892,232,900,241,906,249,912,257,917,266,920,274,924,287,926,295,927,304,927,313,926,322,924,330,920,344,913,356,908,365,902,372,891,385,878,397,864,408,848,418,836,425,825,431,812,437,799,443,777,452,763,456,747,461,732,465,715,469,699,473,682,476,655,480,638,482,620,483,602,485,585,485,567,486,549,486,521,485,503,484,485,482,468,480,451,478,425,474,408,470,392,466,376,462,361,458,346,453,335,449],[567,598,566,593,566,588,568,586,571,582,576,578,683,524,687,522,695,520,699,519,708,519,718,518,727,519,736,521,743,523,864,579,868,577,859,570,852,561,847,554,842,545,840,537,839,530,839,523,840,516,843,509,846,502,852,494,858,488,865,481,872,475,881,470,892,463,903,458,917,453,930,448,942,445,955,442,972,439,986,437,1000,436,1018,435,1032,434,1046,435,1061,435,1076,437,1094,439,1111,443,1127,447,1132,444,1011,388,1006,385,1002,381,1000,376,1000,372,1002,367,1003,365,1005,363,1010,359,1117,305,1125,303,1134,301,1138,300,1147,300,1158,300,889,175,851,194,862,201,872,208,882,215,891,223,899,231,907,239,913,248,919,256,924,265,928,274,931,282,933,291,934,300,934,309,934,318,932,327,930,335,927,344,920,357,912,370,901,382,889,394,880,402,870,409,854,420,842,427,830,433,809,443,788,452,773,457,759,462,734,469,717,472,702,476,675,481,658,483,640,485,613,488,595,489,576,489,558,489,540,489,521,489,503,487,485,486,467,484,449,481,432,479,415,475,398,472,381,468,365,463,350,459,335,454,298,473,567,598],[559,589,561,585,562,583,564,580,570,576,675,523,683,520,692,517,702,515,708,515,718,515,729,516,739,518,748,521,849,567,843,560,839,553,835,547,833,539,832,532,832,525,833,518,835,511,838,504,842,497,847,491,853,484,860,478,868,472,878,466,888,460,899,455,910,451,922,447,935,443,948,440,961,437,975,435,990,433,1004,432,1019,431,1034,431,1048,431,1063,432,1077,433,1092,435,1107,438,1006,391,1000,386,995,382,993,377,993,371,993,369,996,364,1001,359,1008,355,1113,303,1121,300,1126,298,1131,297,1139,297,889,180,861,194,879,206,888,214,898,222,906,230,913,238,920,247,926,255,931,264,935,273,938,282,940,290,941,299,942,308,941,317,940,327,936,341,930,354,924,363,919,371,908,384,895,396,886,404,877,411,859,423,848,429,835,436,814,446,793,455,777,460,763,465,737,472,720,476,705,479,677,484,660,486,642,489,613,491,594,492,576,493,557,493,538,493,519,492,501,491,482,489,465,487,447,485,429,482,412,479,395,475,378,471,362,466,336,458,308,472,559,589],[555,582,558,579,561,576,568,571,669,521,679,517,684,515,695,513,701,512,713,511,725,512,737,513,747,516,757,520,832,554,829,549,827,542,825,537,824,529,825,522,826,515,828,510,831,503,834,498,838,491,843,486,850,480,857,474,865,468,873,463,882,458,893,453,902,450,913,446,925,441,936,439,948,436,959,434,973,431,987,430,998,429,1013,428,1027,427,1039,427,1054,428,1068,429,1079,430,1004,395,996,391,990,385,987,380,985,374,986,368,988,365,992,360,995,357,1003,353,1104,302,1113,298,1118,296,1125,295,889,185,870,194,879,200,890,208,900,216,908,224,917,233,923,240,930,249,935,258,942,272,945,281,947,291,949,300,949,309,948,318,947,327,943,341,937,355,931,364,926,372,914,385,902,398,893,405,883,413,865,425,853,432,841,438,820,448,797,457,781,463,767,468,741,475,723,479,707,482,679,487,662,490,644,492,614,495,596,496,577,496,558,497,539,496,509,495,490,494,471,492,454,490,436,487,418,484,400,480,383,476,366,472,350,467,337,463,319,472,555,582],[552,576,559,571,563,569,664,518,669,516,680,512,686,511,699,509,713,508,726,508,739,510,751,513,762,517,820,544,817,532,818,520,819,514,821,507,827,497,836,486,841,480,848,474,860,465,876,456,885,452,896,447,914,441,926,437,937,434,960,430,971,428,985,426,1007,424,1032,424,1057,424,999,398,990,393,984,387,980,381,978,374,979,368,981,364,986,358,993,353,997,350,1098,299,1103,297,1113,294,889,190,880,195,891,202,901,210,911,218,919,227,927,236,934,244,940,253,945,262,951,276,953,285,955,294,956,308,955,323,952,337,948,347,944,355,935,369,929,378,922,386,908,400,898,408,889,415,871,427,858,434,846,441,824,451,810,457,795,462,769,471,754,475,737,480,709,486,692,489,673,492,644,496,624,497,607,499,576,500,547,500,527,499,510,499,481,496,462,494,443,492,425,489,406,485,389,481,371,477,354,472,338,468,329,472,552,576],[551,571,558,566,659,516,664,513,670,511,677,509,683,507,690,506,698,505,705,505,713,504,720,504,727,505,735,506,742,507,749,508,755,510,761,512,767,515,810,535,810,522,812,512,816,502,823,491,832,481,842,472,857,462,871,454,888,446,906,439,924,434,947,428,969,425,990,422,1012,421,1037,420,994,400,989,398,984,395,980,392,977,388,974,385,973,381,971,378,971,374,971,371,972,367,974,363,976,360,979,357,983,354,987,351,992,348,1093,297,1101,293,889,195,907,208,917,217,925,225,937,239,943,247,949,256,956,271,959,280,962,289,963,304,963,313,962,323,959,338,955,347,951,356,942,371,935,380,928,388,914,401,905,409,895,417,876,429,863,437,851,443,829,454,815,459,799,465,773,474,758,478,740,483,711,489,693,493,676,495,657,498,637,500,606,502,588,503,568,504,537,503,519,503,499,501,468,499,449,496,431,494,402,488,384,484,368,480,339,472,551,571],[385,488,550,565,654,513,660,510,666,508,673,506,680,504,688,503,696,502,704,501,712,501,721,501,729,501,737,502,745,504,752,505,759,507,766,509,802,526,804,516,807,505,812,495,820,485,828,477,839,467,851,459,866,451,879,445,897,438,916,432,936,427,957,423,976,420,998,418,1020,417,984,400,978,397,974,393,970,390,968,386,965,382,964,378,963,374,964,370,965,366,967,362,969,359,973,355,977,352,981,348,987,345,1090,293,925,216,933,224,940,232,950,246,959,260,965,275,968,285,970,294,971,308,970,323,966,338,961,352,952,367,942,381,930,394,916,407,900,420,882,432,869,439,857,446,835,456,810,466,785,474,770,479,752,484,725,490,695,496,666,500,637,504,607,506,587,507,568,507,538,507,508,506,476,503,447,499,418,495,401,492,385,488],[550,560,648,511,655,508,666,504,648,506,630,508,599,510,569,511,538,510,507,509,477,507,447,503,417,499,550,560],[708,497,721,497,730,498,739,499,747,500,755,502,763,504,770,507,796,518,798,510,802,500,808,491,815,481,824,473,835,464,847,456,860,449,875,442,891,436,907,430,925,425,943,421,963,418,982,416,1003,414,978,402,973,399,968,395,964,391,961,387,958,383,957,379,956,372,949,382,941,391,928,404,918,412,907,421,894,430,876,441,862,448,846,456,830,462,814,469,791,477,774,482,754,487,728,493,708,497],[968,352,976,346,982,343,1080,293,947,232,958,246,966,260,972,275,976,289,978,304,977,319,975,334,972,343,968,352],[550,555,639,511,611,513,587,514,566,514,537,514,517,513,494,512,473,510,445,507,550,555],[738,495,750,497,759,499,767,501,775,504,790,511,794,501,800,491,807,481,816,472,795,480,778,485,757,490,738,495],[909,426,928,421,946,417,967,414,987,412,972,404,967,401,961,397,957,393,953,387,944,396,934,406,923,415,909,426],[981,338,1070,293,965,245,973,258,977,268,981,278,984,289,985,299,985,313,984,325,981,338],[550,550,618,516,598,517,580,517,545,518,527,517,505,516,484,515,470,513,550,550],[757,495,771,498,779,501,786,504,791,492,798,483,779,489,757,495],[930,417,950,413,972,410,967,407,961,403,953,396,941,407,930,417],[991,328,1059,294,979,256,983,263,987,274,990,284,992,293,993,309,992,318,991,328],[549,545,599,520,569,521,545,521,515,520,492,519,549,545],[772,495,781,497,785,491,776,494,772,495],[947,410,959,408,953,404,951,405,947,410],[999,319,1049,294,992,267,996,278,999,292,1000,304,999,319],[549,540,581,524,548,525,513,524,549,540],[1007,310,1039,294,1003,277,1006,294,1007,310],[549,535,563,528,533,528,549,535],[1014,301,1028,294,1012,286,1014,293,1014,301]];
var c=document.getElementById('cv');if(!c||!c.getContext)return;
var ctx=c.getContext('2d');if(!ctx)return;
var W=1366,H=767,img=ctx.createImageData(W,H),d=img.data;
function px(x,y,r,g,b){if(x<0||y<0||x>=W||y>=H)return;var i=(y*W+x)*4;d[i]=r;d[i+1]=g;d[i+2]=b;d[i+3]=255;}
function ln(x0,y0,x1,y1,r,g,b,f){var dx=Math.abs(x1-x0),sx=x0<x1?1:-1,dy=-Math.abs(y1-y0),sy=y0<y1?1:-1,e=dx+dy;for(;;){if(!f||f(x0,y0))px(x0,y0,r,g,b);if(x0==x1&&y0==y1)break;var e2=2*e;if(e2>=dy){e+=dy;x0+=sx;}if(e2<=dx){e+=dx;y0+=sy;}}}
function pl(A,r,g,b,f){for(var k=0;k<A.length;k++){var p=A[k];for(var j=0;j+3<p.length;j+=2)ln(p[j],p[j+1],p[j+2],p[j+3],r,g,b,f);}}
pl(BL,0,0,255);pl(RD,255,0,0);
ln(795,418,795,178,0,0,255);ln(795,418,989,507,255,0,0);ln(795,418,612,510,64,240,48);
function fp(P,r,g,b){var n=P.length/2,y0=1e9,y1=-1e9;for(var i=0;i<n;i++){y0=Math.min(y0,P[2*i+1]);y1=Math.max(y1,P[2*i+1]);}
for(var y=Math.floor(y0);y<=Math.ceil(y1);y++){var cy=y+0.5,xs=[];for(var i=0,j=n-1;i<n;j=i++){var xi=P[2*i],yi=P[2*i+1],xj=P[2*j],yj=P[2*j+1];if((yi>cy)!=(yj>cy))xs.push(xi+(cy-yi)*(xj-xi)/(yj-yi));}
xs.sort(function(a,b){return a-b;});for(var k=0;k+1<xs.length;k+=2){for(var x=Math.ceil(xs[k]-0.5);x+0.5<=xs[k+1];x++)px(x,y,r,g,b);}}}
fp([795.9,100,778.5,134,769.4,151.6,764.1,170.6,800.6,179.8,831.4,165.6],0,0,255);
fp([1006.9,484.1,1029.2,493.5,1058,539.2,991.1,548.6,982.3,518.1],255,0,0);
fp([593.3,488.2,568.7,498.2,544.1,544.5,608.6,552.1,612,539.2,618.6,521],64,240,48);
var CP=[538,547,552,543.5,569,540.5,586,536.8,603,533.5,620,529,625,570,538,570];
function inside(x,y){if(x<530||x>630||y<480||y>575)return false;x+=0.5;y+=0.5;var ins=false;for(var i=0,j=CP.length-2;i<CP.length;j=i,i+=2){var xi=CP[i],yi=CP[i+1],xj=CP[j],yj=CP[j+1];if(((yi>y)!=(yj>y))&&(x<(xj-xi)*(y-yi)/(yj-yi)+xi))ins=!ins;}return ins;}
pl(RD,255,0,0,inside);
for(var y=155;y<179;y++)px(396,y,0,0,255);
for(var y=43;y<681;y++)px(703,y,255,255,0);
ctx.putImageData(img,0,0);
c.style.display='block';
document.getElementById('vec').style.display='none';
})();
</script>

<div id="np" class="abs">
 <div class="abs" style="left:0;top:0;width:268px;height:47px;background:#fff"></div>
 <svg class="abs" style="left:0;top:0" width="268" height="47">
  <defs><linearGradient id="npg" x1="0" y1="0" x2="1" y2="1"><stop offset="0" stop-color="#b4e2ee"/><stop offset="1" stop-color="#6bbbd0"/></linearGradient></defs>
  <path d="M13.5,4.5 H23.3 V18.3 H13.5" fill="#fff" stroke="#a89466" stroke-width="1"/>
  <polygon points="12,4 22.5,4 20.5,17.5 8.5,17.5" fill="url(#npg)"/>
  <g stroke="#d8f1f7" stroke-width="0.8"><line x1="11.3" y1="7.5" x2="21.5" y2="7.5"/><line x1="10.8" y1="10.5" x2="21" y2="10.5"/><line x1="10.3" y1="13.5" x2="20.5" y2="13.5"/></g>
  <g fill="#3a3a3a"><rect x="12" y="3" width="1.2" height="2"/><rect x="14" y="3" width="1.2" height="2"/><rect x="16" y="3" width="1.2" height="2"/><rect x="18" y="3" width="1.2" height="2"/><rect x="20.2" y="3" width="1.2" height="2"/></g>
  <line x1="150" y1="11.5" x2="160" y2="11.5" stroke="#000" stroke-width="1"/>
  <rect x="195.5" y="6.5" width="9" height="9" fill="none" stroke="#000" stroke-width="1"/>
  <path d="M241,6 L251,16 M251,6 L241,16" stroke="#000" stroke-width="1"/>
 </svg>
 <div class="abs" style="left:29.5px;top:4.8px;font-size:12.2px;color:#000;white-space:nowrap">pocket - Notepad</div>
 <div class="abs menu" style="left:7px">File</div>
 <div class="abs menu" style="left:39px">Edit</div>
 <div class="abs menu" style="left:73px">Format</div>
 <div class="abs menu" style="left:124px">View</div>
 <div class="abs menu" style="left:164px">Help</div>
 <div id="edit" class="abs"></div>
 <div class="abs mono" style="left:6.8px;top:51.2px">%
(File Name: NcFile.nc)
G21
(Tool T1,2.5,0,100,0)
M6T1
G0X62.4990Y42.5000Z100.0000
G0Z50.0000
G1Z0.0000
Y40.5000
X60.4990
Y12.4520
X58.4990
Y-38.4990
X51.0790
X51.0480Y-38.2300
X49.4387Y-30.5909
X46.6931Y-23.2829
X42.8742Y-16.4740
X38.0699Y-10.3206
X32.3906Y-4.9642</div>
 <div class="abs sb" style="left:251px;top:49px;width:16px;height:368px"></div>
 <div class="abs" style="left:251px;top:66px;width:15px;height:126px;background:#cdcdcd"></div>
 <div class="abs sb" style="left:2px;top:417px;width:265px;height:16px"></div>
 <div class="abs" style="left:19px;top:417px;width:65px;height:15px;background:#cdcdcd"></div>
 <svg class="abs" style="left:0;top:0" width="268" height="434">
  <g fill="none" stroke="#606060" stroke-width="2" stroke-linejoin="miter">
   <path d="M254.8,60.2 L258.5,56.5 L262.2,60.2"/>
   <path d="M255,405.8 L258.6,409.6 L262.2,405.8"/>
   <path d="M13,421.2 L9.2,424.4 L13,427.6"/>
   <path d="M239,421.2 L242.8,424.4 L239,427.6"/>
  </g>
  <g fill="#a8a8a8"><rect x="256" y="429" width="2" height="2"/><rect x="259" y="429" width="2" height="2"/><rect x="262" y="429" width="2" height="2"/><rect x="259" y="426" width="2" height="2"/><rect x="262" y="426" width="2" height="2"/><rect x="262" y="423" width="2" height="2"/></g>
 </svg>
</div>

<div id="ftr" class="abs">
<span style="left:265px;transform:scaleX(0.948)">©2016 - Present, Machining Software Pvt. Ltd. All Rights Reserved.</span>
<span style="left:827px;transform:scaleX(0.945);color:#f8f8f8;-webkit-text-stroke:0.45px #f8f8f8">Terms &amp; Conditions</span>
<span style="left:1026px;transform:scaleX(0.945)">Beta Version 1.0 Build 002</span>
</div>
</body></html>
